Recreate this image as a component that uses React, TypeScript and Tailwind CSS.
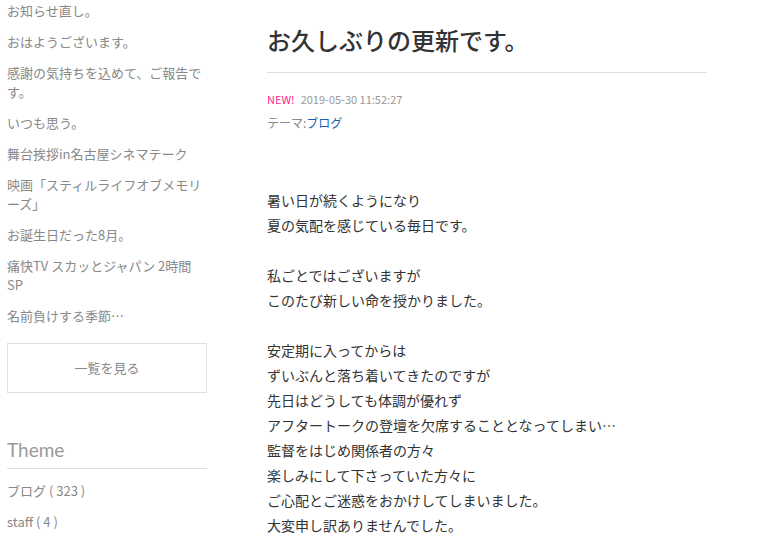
import React from "react";

const sidebarItems: string[] = [
  "お知らせ直し。",
  "おはようございます。",
  "感謝の気持ちを込めて、ご報告です。",
  "いつも思う。",
  "舞台挨拶in名古屋シネマテーク",
  "映画「スティルライフオブメモリーズ」",
  "お誕生日だった8月。",
  "痛快TV スカッとジャパン 2時間SP",
  "名前負けする季節…",
];

const bodyParagraphs: string[][] = [
  ["暑い日が続くようになり", "夏の気配を感じている毎日です。"],
  ["私ごとではございますが", "このたび新しい命を授かりました。"],
  [
    "安定期に入ってからは",
    "ずいぶんと落ち着いてきたのですが",
    "先日はどうしても体調が優れず",
    "アフタートークの登壇を欠席することとなってしまい…",
    "監督をはじめ関係者の方々",
    "楽しみにして下さっていた方々に",
    "ご心配とご迷惑をおかけしてしまいました。",
    "大変申し訳ありませんでした。",
  ],
];

export default function App() {
  return (
    <div
      className="w-[760px] h-[546px] overflow-hidden bg-white flex pl-[7px]"
      style={{ fontFamily: '"Noto Sans CJK JP", "Noto Sans", sans-serif' }}
    >
      <aside className="w-[200px] shrink-0 pt-[1px]">
        <ul className="flex flex-col gap-[12px]">
          {sidebarItems.map((t) => (
            <li key={t} className="text-[13px] leading-[19px] text-[#888]">
              {t}
            </li>
          ))}
        </ul>
        <div className="mt-[18px] h-[50px] border border-[#e0e0e0] flex items-center justify-center text-[13px] text-[#888]">
          一覧を見る
        </div>
        <h2
          className="mt-[45px] text-[19px] leading-[24px] text-[#999] pb-[6px] border-b border-[#e0e0e0]"
          style={{ fontFamily: 'Lato, "Noto Sans", sans-serif' }}
        >
          Theme
        </h2>
        <ul className="mt-[12px] flex flex-col gap-[12px]">
          <li className="text-[13px] leading-[19px] text-[#888]">ブログ ( 323 )</li>
          <li className="text-[13px] leading-[19px] text-[#888]">staff ( 4 )</li>
        </ul>
      </aside>
      <main className="ml-[60px] w-[440px] shrink-0">
        <h1 className="pt-[24px] pb-[16px] text-[24px] leading-[32px] font-medium text-[#333] border-b border-[#e0e0e0]">
          お久しぶりの更新です。
        </h1>
        <div className="mt-[18px] flex items-center gap-[6px] text-[11px] leading-[16px]">
          <span className="text-[#ff1f8f]">NEW!</span>
          <span className="text-[#999]">2019-05-30 11:52:27</span>
        </div>
        <div className="mt-[8px] text-[12px] leading-[16px] text-[#888]">
          テーマ:<span className="text-[#1a5fb4]">ブログ</span>
        </div>
        <div className="mt-[57px] flex flex-col gap-[25px] text-[14px] leading-[25px] text-[#333]">
          {bodyParagraphs.map((p, i) => (
            <p key={i}>
              {p.map((l) => (
                <span key={l} className="block">
                  {l}
                </span>
              ))}
            </p>
          ))}
        </div>
      </main>
    </div>
  );
}
